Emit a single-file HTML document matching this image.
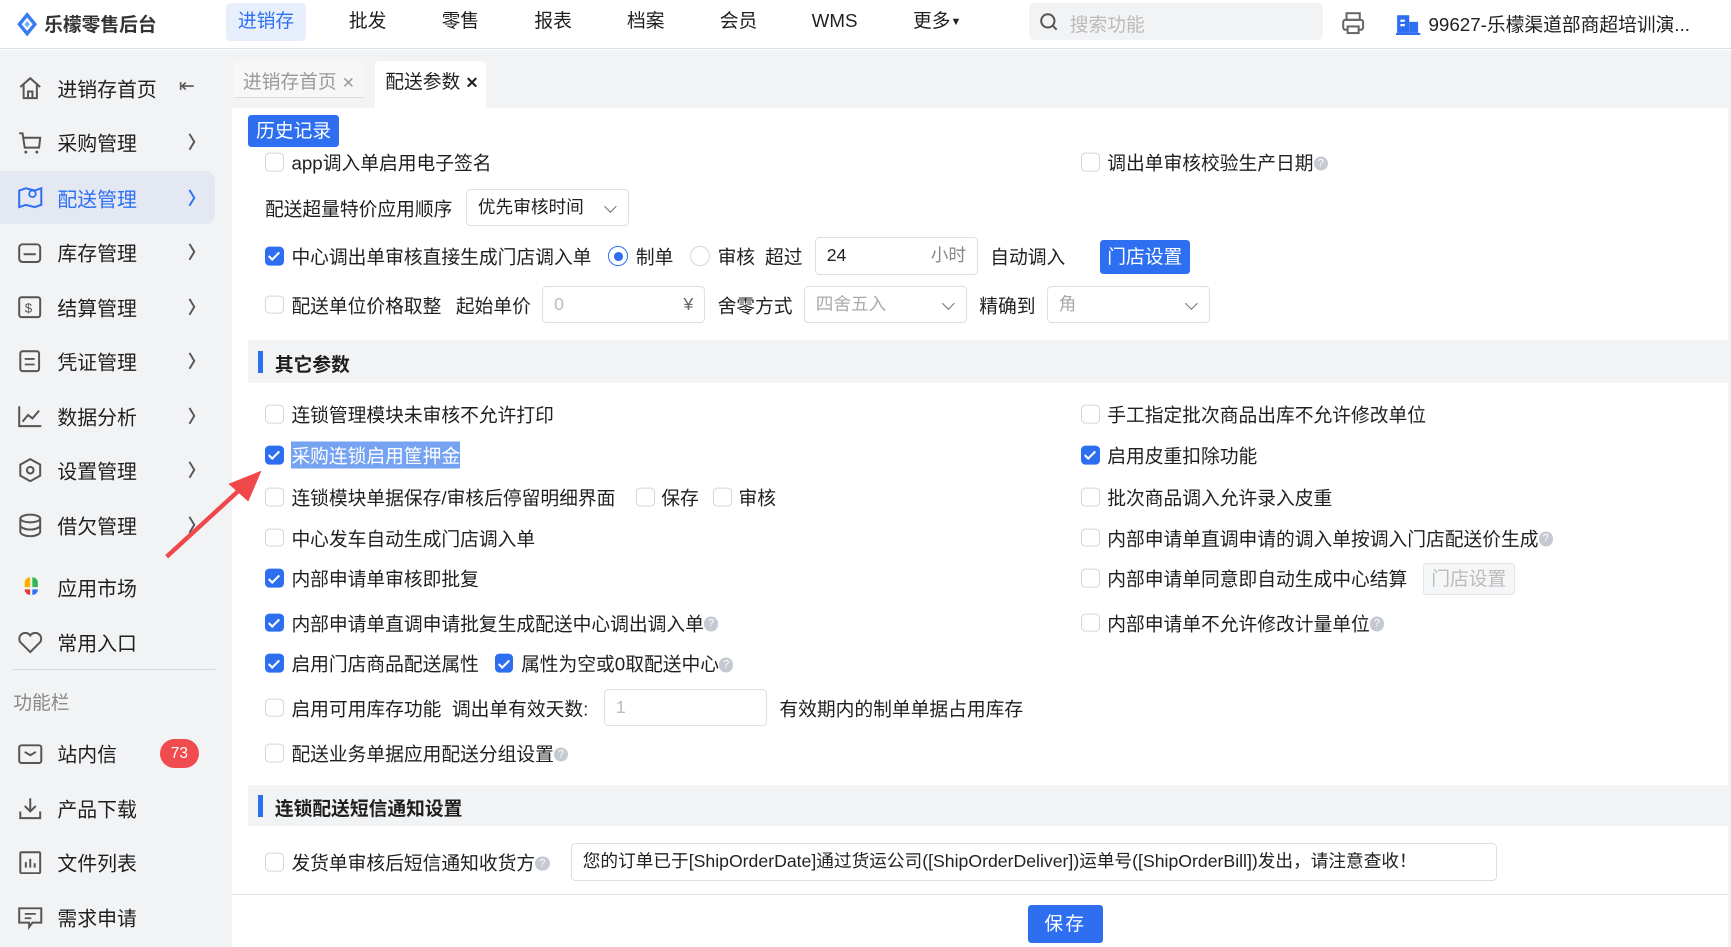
<!DOCTYPE html>
<html><head><meta charset="utf-8"><style>
*{box-sizing:border-box;margin:0;padding:0}
html,body{width:1731px;height:947px;overflow:hidden;background:#fff}
#w{zoom:1.10395;width:1568px;height:858px;position:relative;font-family:"Liberation Sans","Noto Sans CJK SC",sans-serif;color:#1f1f1f;font-size:17px}
.a{position:absolute;white-space:nowrap}
.top{left:0;top:0;width:1568px;height:44px;background:#fff;border-bottom:1px solid #dcdfe6}
.nav{top:0;height:44px;line-height:42px;font-size:17px;transform:translateX(-50%)}
.side{left:0;top:45px;width:210px;height:813px;background:#f2f3f5}
.si{left:52px;font-size:18px;transform:translateY(-50%)}
.ar{left:170px;transform:translateY(-50%);color:#555;font-size:16px;font-weight:bold}
.cb{width:17px;height:17px;border:1px solid #d4d6db;border-radius:4px;background:#fff;transform:translateY(-50%)}
.cb.on{background:#2e6ff2;border-color:#2e6ff2}
.cb.on:after{content:"";position:absolute;left:5px;top:2px;width:4px;height:8px;border:solid #fff;border-width:0 2px 2px 0;transform:rotate(45deg)}
.t{transform:translateY(-50%)}
.q{display:inline-block;width:13px;height:13px;border-radius:50%;background:#c5c9d1;color:#fff;font-size:10px;line-height:13px;text-align:center;vertical-align:3px}
.inp{border:1px solid #dcdfe6;border-radius:4px;background:#fff;height:34px;line-height:32px;padding:0 10px;font-size:16px}
.sel:after{content:"";position:absolute;right:12px;top:11px;width:7px;height:7px;border:solid #666;border-width:0 1.5px 1.5px 0;transform:rotate(45deg)}
.sec{left:225px;width:1340px;background:#f2f3f5;font-weight:bold}
.sec b{position:absolute;left:9px;width:4px;background:#2e6ff2}
.btn{background:#2e6ff2;color:#fff;border-radius:3px;text-align:center}
</style></head><body><div id="w">
<div class="a top"></div>
<svg class="a" style="left:14px;top:10px" width="22" height="24" viewBox="0 0 22 24"><path d="M11 1 L20 12 L11 23 L2 12Z" fill="#3a7bf0"/><path d="M11 6 L16 12 L11 18 L6 12Z" fill="#fff"/><path d="M11 9 L13.5 12 L11 15 L8.5 12Z" fill="#6fb0ff"/></svg>
<div class="a" style="left:40px;top:9px;font-size:17px;font-weight:bold;color:#333">乐檬零售后台</div>
<div class="a" style="left:205px;top:3px;width:72px;height:34px;background:#e8effc;border-radius:4px"></div>
<div class="a nav" style="left:241px;color:#2e6ff2;top:-2px">进销存</div>
<div class="a nav" style="left:333px;top:-2px">批发</div>
<div class="a nav" style="left:417px;top:-2px">零售</div>
<div class="a nav" style="left:501px;top:-2px">报表</div>
<div class="a nav" style="left:585px;top:-2px">档案</div>
<div class="a nav" style="left:669px;top:-2px">会员</div>
<div class="a nav" style="left:756px;top:-2px">WMS</div>
<div class="a nav" style="left:849px;top:-2px">更多<span style="font-size:10px;vertical-align:2px">▼</span></div>
<div class="a" style="left:932px;top:3px;width:266px;height:33px;background:#f2f3f5;border-radius:4px"></div>
<svg class="a" style="left:941px;top:11px" width="18" height="18"><circle cx="8" cy="8" r="6" fill="none" stroke="#555" stroke-width="1.8"/><path d="M12.5 12.5L16 16" stroke="#555" stroke-width="1.8"/></svg>
<div class="a" style="left:969px;top:9px;color:#bbb;font-size:17px">搜索功能</div>
<svg class="a" style="left:1215px;top:10px" width="22" height="22"><rect x="5" y="2" width="12" height="6" fill="none" stroke="#666" stroke-width="1.8"/><rect x="2" y="8" width="18" height="9" rx="2" fill="none" stroke="#666" stroke-width="1.8"/><rect x="6" y="14" width="10" height="6" fill="#fff" stroke="#666" stroke-width="1.8"/></svg>
<svg class="a" style="left:1265px;top:12px" width="22" height="20"><rect x="1" y="2" width="11" height="16" fill="#2e6ff2"/><rect x="12" y="8" width="8" height="10" fill="#2e6ff2"/><rect x="4" y="6" width="4" height="2" fill="#fff"/><rect x="4" y="10" width="4" height="2" fill="#fff"/><rect x="0" y="18" width="22" height="2" fill="#2e6ff2"/></svg>
<div class="a" style="left:1294px;top:9px;font-size:17px">99627-乐檬渠道部商超培训演...</div>

<div class="a side"></div>
<div class="a" style="left:0;top:155px;width:195px;height:48px;background:#e4e8f2;border-radius:0 8px 8px 0"></div>
<svg class="a" style="left:15px;top:69px" width="24" height="22"><path d="M3 10L12 2L21 10M6 8V20H18V8M10 20V14H14V20" fill="none" stroke="#555" stroke-width="1.8"/></svg>
<div class="a si" style="top:80px">进销存首页</div><div class="a" style="left:162px;top:68px;font-size:17px;color:#555">⇤</div>
<svg class="a" style="left:15px;top:118px" width="24" height="22"><path d="M2 3H5L7 16H20L21 7H6" fill="none" stroke="#555" stroke-width="1.8"/><circle cx="8" cy="20" r="1.3" fill="#555"/><circle cx="18" cy="20" r="1.3" fill="#555"/></svg>
<div class="a si" style="top:129px">采购管理</div><div class="a ar" style="top:129px">〉</div>
<svg class="a" style="left:15px;top:168px" width="24" height="22"><path d="M2 5L8 3L16 5L22 3V18L16 20L8 18L2 20Z" fill="none" stroke="#2e6ff2" stroke-width="1.8"/><circle cx="14" cy="8" r="3" fill="none" stroke="#2e6ff2" stroke-width="1.6"/></svg>
<div class="a si" style="top:179px;color:#2e6ff2">配送管理</div><div class="a ar" style="top:179px;color:#2e6ff2">〉</div>
<svg class="a" style="left:15px;top:218px" width="24" height="22"><rect x="2" y="3" width="19" height="16" rx="3" fill="none" stroke="#555" stroke-width="1.8"/><path d="M6 12H17" stroke="#555" stroke-width="1.8"/></svg>
<div class="a si" style="top:228px">库存管理</div><div class="a ar" style="top:228px">〉</div>
<svg class="a" style="left:15px;top:267px" width="24" height="22"><rect x="2" y="2" width="19" height="18" rx="2" fill="none" stroke="#555" stroke-width="1.8"/><text x="7" y="16" font-size="12" fill="#555">$</text></svg>
<div class="a si" style="top:278px">结算管理</div><div class="a ar" style="top:278px">〉</div>
<svg class="a" style="left:15px;top:316px" width="24" height="22"><rect x="3" y="2" width="17" height="18" rx="2" fill="none" stroke="#555" stroke-width="1.8"/><path d="M7 9H16M7 14H16" stroke="#555" stroke-width="1.6"/></svg>
<div class="a si" style="top:327px">凭证管理</div><div class="a ar" style="top:327px">〉</div>
<svg class="a" style="left:15px;top:366px" width="24" height="22"><path d="M2 2V20H22M5 16L10 10L14 13L20 6" fill="none" stroke="#555" stroke-width="1.8"/></svg>
<div class="a si" style="top:377px">数据分析</div><div class="a ar" style="top:377px">〉</div>
<svg class="a" style="left:15px;top:415px" width="24" height="22"><path d="M12 1L21 6V16L12 21L3 16V6Z" fill="none" stroke="#555" stroke-width="1.8"/><circle cx="12" cy="11" r="3" fill="none" stroke="#555" stroke-width="1.8"/></svg>
<div class="a si" style="top:426px">设置管理</div><div class="a ar" style="top:426px">〉</div>
<svg class="a" style="left:15px;top:465px" width="24" height="22"><ellipse cx="12" cy="5" rx="9" ry="3.5" fill="none" stroke="#555" stroke-width="1.8"/><path d="M3 5V17C3 19 7 21 12 21S21 19 21 17V5M3 11C3 13 7 15 12 15S21 13 21 11" fill="none" stroke="#555" stroke-width="1.8"/></svg>
<div class="a si" style="top:476px">借欠管理</div><div class="a ar" style="top:476px">〉</div>
<svg class="a" style="left:16px;top:521px" width="24" height="24"><path d="M11 2A5 5 0 0 0 6 7V11H11Z" fill="#f7b500"/><path d="M13 2A5 5 0 0 1 18 7V11H13Z" fill="#35b558"/><path d="M11 13H6A5 5 0 0 0 11 18Z" fill="#e53935"/><path d="M13 13H18A5 5 0 0 1 13 18Z" fill="#2e6ff2"/></svg>
<div class="a si" style="top:532px">应用市场</div>
<svg class="a" style="left:15px;top:571px" width="24" height="22"><path d="M12 20L3 11A5 5 0 0 1 12 5A5 5 0 0 1 21 11Z" fill="none" stroke="#555" stroke-width="1.8"/></svg>
<div class="a si" style="top:582px">常用入口</div>
<div class="a" style="left:12px;top:606px;width:183px;height:1px;background:#d6d8dc"></div>
<div class="a" style="left:12px;top:623px;color:#888;font-size:17px">功能栏</div>
<svg class="a" style="left:15px;top:672px" width="24" height="22"><rect x="2" y="3" width="20" height="16" rx="2" fill="none" stroke="#555" stroke-width="1.8"/><path d="M7 9L12 12L17 9" fill="none" stroke="#555" stroke-width="1.8"/></svg>
<div class="a si" style="top:682px">站内信</div>
<div class="a" style="left:145px;top:669px;width:35px;height:27px;border-radius:14px;background:#f04b4f;color:#fff;font-size:14px;text-align:center;line-height:27px">73</div>
<svg class="a" style="left:15px;top:721px" width="24" height="22"><path d="M12 2V14M7 9L12 14L17 9M3 14V20H21V14" fill="none" stroke="#555" stroke-width="1.8"/></svg>
<div class="a si" style="top:732px">产品下载</div>
<svg class="a" style="left:15px;top:770px" width="24" height="22"><rect x="3" y="2" width="18" height="19" rx="1" fill="none" stroke="#555" stroke-width="1.8"/><path d="M8 16V11M12 16V8M16 16V12" stroke="#555" stroke-width="1.8"/></svg>
<div class="a si" style="top:781px">文件列表</div>
<svg class="a" style="left:15px;top:820px" width="24" height="22"><path d="M2 3H22V16H14L11 20V16H2Z" fill="none" stroke="#555" stroke-width="1.8"/><path d="M7 8H17M7 12H13" stroke="#555" stroke-width="1.6"/></svg>
<div class="a si" style="top:831px">需求申请</div>

<div class="a" style="left:210px;top:45px;width:1358px;height:53px;background:#f2f3f5"></div>
<div class="a" style="left:212px;top:55px;width:118px;height:34px;background:#f7f7f8;border-bottom:1px solid #ddd;border-radius:4px 4px 0 0"></div>
<div class="a" style="left:220px;top:61px;color:#999;font-size:17px">进销存首页 <span style="font-size:14px">✕</span></div>
<div class="a" style="left:340px;top:55px;width:100px;height:43px;background:#fff;border-radius:4px 4px 0 0"></div>
<div class="a" style="left:349px;top:61px;font-size:17px">配送参数 <span style="font-size:14px;font-weight:bold">✕</span></div>
<div class="a" style="left:1565px;top:98px;width:3px;height:760px;background:#f2f3f5"></div>

<div class="a btn" style="left:225px;top:104px;width:82px;height:29px;line-height:29px;font-size:17px">历史记录</div>

<div class="a cb" style="left:240px;top:147px"></div><div class="a t" style="left:264px;top:147px">app调入单启用电子签名</div>
<div class="a cb" style="left:979px;top:147px"></div><div class="a t" style="left:1003px;top:147px">调出单审核校验生产日期<span class="q">?</span></div>

<div class="a t" style="left:240px;top:188px">配送超量特价应用顺序</div>
<div class="a inp sel" style="left:422px;top:171px;width:148px">优先审核时间</div>

<div class="a cb on" style="left:240px;top:232px"></div><div class="a t" style="left:264px;top:232px">中心调出单审核直接生成门店调入单</div>
<div class="a" style="left:551px;top:223px;width:18px;height:18px;border-radius:50%;border:1px solid #2e6ff2"></div><div class="a" style="left:556px;top:228px;width:8px;height:8px;border-radius:50%;background:#2e6ff2"></div>
<div class="a t" style="left:576px;top:232px">制单</div>
<div class="a" style="left:625px;top:223px;width:18px;height:18px;border-radius:50%;border:1px solid #d4d6db"></div>
<div class="a t" style="left:650px;top:232px">审核</div><div class="a t" style="left:693px;top:232px">超过</div>
<div class="a inp" style="left:738px;top:215px;width:148px;color:#222">24<span style="float:right;color:#888">小时</span></div>
<div class="a t" style="left:897px;top:232px">自动调入</div>
<div class="a btn" style="left:996px;top:217px;width:82px;height:31px;line-height:31px;font-size:17px">门店设置</div>

<div class="a cb" style="left:240px;top:276px"></div><div class="a t" style="left:264px;top:276px">配送单位价格取整</div>
<div class="a t" style="left:413px;top:276px">起始单价</div>
<div class="a inp" style="left:491px;top:259px;width:148px;color:#bbb">0<span style="float:right;color:#666">¥</span></div>
<div class="a t" style="left:650px;top:276px">舍零方式</div>
<div class="a inp sel" style="left:728px;top:259px;width:148px;color:#aaa">四舍五入</div>
<div class="a t" style="left:887px;top:276px">精确到</div>
<div class="a inp sel" style="left:948px;top:259px;width:148px;color:#aaa">角</div>

<div class="a sec" style="top:308px;height:39px"><b style="top:10px;height:20px"></b><span style="position:absolute;left:24px;top:9px">其它参数</span></div>

<div class="a cb" style="left:240px;top:375px"></div><div class="a t" style="left:264px;top:375px">连锁管理模块未审核不允许打印</div>
<div class="a cb" style="left:979px;top:375px"></div><div class="a t" style="left:1003px;top:375px">手工指定批次商品出库不允许修改单位</div>
<div class="a cb on" style="left:240px;top:412px"></div><div class="a t" style="left:264px;top:412px;background:#76a2f2;color:#fff">采购连锁启用筐押金</div>
<div class="a cb on" style="left:979px;top:412px"></div><div class="a t" style="left:1003px;top:412px">启用皮重扣除功能</div>
<div class="a cb" style="left:240px;top:450px"></div><div class="a t" style="left:264px;top:450px">连锁模块单据保存/审核后停留明细界面</div>
<div class="a cb" style="left:576px;top:450px"></div><div class="a t" style="left:599px;top:450px">保存</div>
<div class="a cb" style="left:646px;top:450px"></div><div class="a t" style="left:669px;top:450px">审核</div>
<div class="a cb" style="left:979px;top:450px"></div><div class="a t" style="left:1003px;top:450px">批次商品调入允许录入皮重</div>
<div class="a cb" style="left:240px;top:487px"></div><div class="a t" style="left:264px;top:487px">中心发车自动生成门店调入单</div>
<div class="a cb" style="left:979px;top:487px"></div><div class="a t" style="left:1003px;top:487px">内部申请单直调申请的调入单按调入门店配送价生成<span class="q">?</span></div>
<div class="a cb on" style="left:240px;top:524px"></div><div class="a t" style="left:264px;top:524px">内部申请单审核即批复</div>
<div class="a cb" style="left:979px;top:524px"></div><div class="a t" style="left:1003px;top:524px">内部申请单同意即自动生成中心结算</div>
<div class="a" style="left:1289px;top:510px;width:83px;height:29px;border:1px solid #e2e4e8;background:#f5f6f8;border-radius:3px;color:#bbb;text-align:center;line-height:27px">门店设置</div>
<div class="a cb on" style="left:240px;top:564px"></div><div class="a t" style="left:264px;top:564px">内部申请单直调申请批复生成配送中心调出调入单<span class="q">?</span></div>
<div class="a cb" style="left:979px;top:564px"></div><div class="a t" style="left:1003px;top:564px">内部申请单不允许修改计量单位<span class="q">?</span></div>
<div class="a cb on" style="left:240px;top:601px"></div><div class="a t" style="left:264px;top:601px">启用门店商品配送属性</div>
<div class="a cb on" style="left:448px;top:601px"></div><div class="a t" style="left:472px;top:601px">属性为空或0取配送中心<span class="q">?</span></div>
<div class="a cb" style="left:240px;top:641px"></div><div class="a t" style="left:264px;top:641px">启用可用库存功能&nbsp; 调出单有效天数:</div>
<div class="a inp" style="left:547px;top:624px;width:148px;color:#bbb">1</div>
<div class="a t" style="left:706px;top:641px">有效期内的制单单据占用库存</div>
<div class="a cb" style="left:240px;top:682px"></div><div class="a t" style="left:264px;top:682px">配送业务单据应用配送分组设置<span class="q">?</span></div>

<div class="a sec" style="top:711px;height:37px"><b style="top:9px;height:20px"></b><span style="position:absolute;left:24px;top:8px">连锁配送短信通知设置</span></div>

<div class="a cb" style="left:240px;top:781px"></div><div class="a t" style="left:264px;top:781px">发货单审核后短信通知收货方<span class="q">?</span></div>
<div class="a inp" style="left:517px;top:764px;width:839px;color:#222">您的订单已于[ShipOrderDate]通过货运公司([ShipOrderDeliver])运单号([ShipOrderBill])发出，请注意查收！</div>

<div class="a" style="left:210px;top:810px;width:1355px;height:48px;background:#fff;border-top:1px solid #e4e6ea"></div>
<div class="a btn" style="left:931px;top:820px;width:68px;height:34px;line-height:34px;font-size:17px;letter-spacing:2px">保存</div>

<svg class="a" style="left:145px;top:420px" width="100" height="90"><path d="M6 84L78 18" stroke="#f0484a" stroke-width="4"/><path d="M92 6L62 18L80 34Z" fill="#f0484a"/></svg>
</div></body></html>
